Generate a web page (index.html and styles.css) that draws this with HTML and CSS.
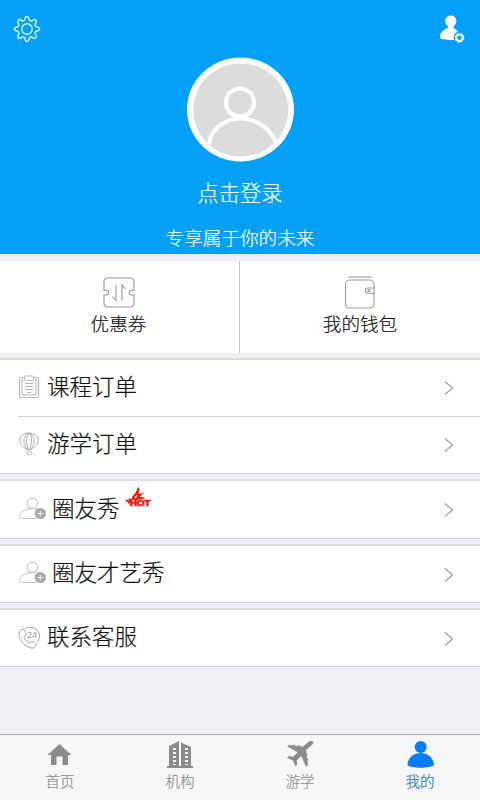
FILE: index.html
```html
<!DOCTYPE html>
<html lang="zh-CN">
<head>
<meta charset="utf-8">
<title>我的</title>
<link rel="stylesheet" href="styles.css">
</head>
<body>
<svg class="defs" width="0" height="0">
  <defs>
    <path id="tooth" d="M0-12.6C3-12.6 .7-9.3 3.4-8.2C6.1-7.1 6.9-11.1 8.9-8.9"/>
    <symbol id="chevron" viewBox="0 0 10 16"><path d="M1 1.500L8.500 8L1 14.500"/></symbol>
    <symbol id="friend" viewBox="0 0 30 26">
      <g fill="none" stroke="#c0c0c0"><circle cx="14.300" cy="7.200" r="5.200"/><path d="M18 22.500H4.500C1 22.500 .5 20 2.200 17.800C5 14 9.500 12.500 14 12.500C17 12.500 19.500 13 21.500 14"/></g>
      <circle cx="22.300" cy="17.500" r="5.600" fill="#a8a8a8"/><path d="M19.300 17.500h6M22.300 14.500v6" stroke="#eee"/>
    </symbol>
  </defs>
</svg>
<div class="app">
  <header class="profile">
    <div class="tools">
      <svg class="gear" width="28" height="28" viewBox="-14 -14 28 28">
        <use href="#tooth"/><use href="#tooth" transform="rotate(45)"/><use href="#tooth" transform="rotate(90)"/><use href="#tooth" transform="rotate(135)"/><use href="#tooth" transform="rotate(180)"/><use href="#tooth" transform="rotate(225)"/><use href="#tooth" transform="rotate(270)"/><use href="#tooth" transform="rotate(315)"/>
        <circle r="5.2"/>
      </svg>
      <svg width="26" height="28" viewBox="0 0 26 28">
        <path fill="#fff" d="M11 .5C7.500.5 5.200 3 5.300 6.200C5.400 8.500 6.300 10 7.800 11.200V13.200C3 14.600 0 17.500 0 22C0 24.200 4.500 25 10.500 25H14.200C12.800 21.500 14.300 17.800 18 16.700C16.800 14.800 15.200 13.800 13.700 13.200V11.200C15.300 10 16.400 8.300 16.400 6C16.400 3 14.200 .5 11 .5Z"/>
        <circle cx="19.500" cy="22.800" r="3.200" fill="none" stroke="#fff" stroke-width="1.800"/><circle cx="19.500" cy="22.800" r="4.300" fill="none" stroke="#fff" stroke-width="1.200" stroke-dasharray="1.900 1.477"/>
      </svg>
    </div>
    <svg class="avatar" width="108" height="106" viewBox="0 0 108 106">
      <ellipse cx="54.500" cy="52.500" rx="53.500" ry="52" fill="#fff"/>
      <ellipse cx="54.700" cy="53" rx="47.500" ry="46.500" fill="#dcdcdc"/>
      <g fill="none" stroke="#fff" stroke-width="4.200"><circle cx="54" cy="45.500" r="14"/><path d="M23.200 90C22 76 36 61.500 54.700 61.500C73.500 61.500 86 75 90.200 86"/></g>
    </svg>
    <div class="login">点击登录</div>
    <div class="slogan">专享属于你的未来</div>
  </header>

  <section class="cards">
    <div class="card">
      <svg width="32" height="32" viewBox="0 0 32 32" fill="none" stroke="#9a9a9a" stroke-width="1.1">
        <path d="M5 1H27Q31 1 31 5V13.200H28.700A2.400 2.400 0 0 0 28.700 18H31V26Q31 30 27 30H5Q1 30 1 26V18H3.300A2.400 2.400 0 0 0 3.300 13.200H1V5Q1 1 5 1Z"/>
        <path d="M13 8V23.500L9.500 19.500M19 23.500V8L22.500 12"/>
      </svg>
      <span>优惠券</span>
    </div>
    <div class="card">
      <svg width="32" height="34" viewBox="0 0 32 34" fill="none" stroke="#9a9a9a" stroke-width="1.1">
        <path d="M4 1H28"/><rect x="1.500" y="4" width="28.500" height="28" rx="4"/><path d="M30 12H24A2.600 2.600 0 0 0 24 17.200H30"/><circle cx="25" cy="14.600" r="1.100"/>
      </svg>
      <span>我的钱包</span>
    </div>
  </section>

  <section class="group pair">
    <div class="row">
      <svg class="icon" width="22" height="24" viewBox="0 0 22 24" fill="none" stroke="#b5b5b5">
        <rect x="1.500" y="2.500" width="19" height="20" rx="1.500"/><path d="M5 4.500H4V20H18V4.500H17"/><rect x="6.500" y="1" width="9" height="4.500" rx="1" fill="#fff"/><path d="M7 8.500h8M7 11.500h8M7 14.500h8M9 17.500h4"/>
      </svg>
      <span>课程订单</span><svg class="arrow"><use href="#chevron"/></svg>
    </div>
    <div class="row">
      <svg class="icon" width="22" height="24" viewBox="0 0 22 24" fill="none" stroke="#b0b0b0">
        <path d="M9 17.500C5.500 15 1.800 12 1.800 8C1.800 3.500 6 1 11 1S20.200 3.500 20.200 8C20.200 12 16.500 15 13 17.500ZM9.300 17.500C4 11 5 3 11 1C17 3 18 11 12.700 17.500M10.300 17.500C7.700 10 8 4 11 1C14 4 14.300 10 11.700 17.500"/><circle cx="11.300" cy="21" r="2"/>
      </svg>
      <span>游学订单</span><svg class="arrow"><use href="#chevron"/></svg>
    </div>
  </section>

  <section class="group show">
    <div class="row">
      <svg class="friend"><use href="#friend"/></svg>
      <span>圈友秀</span>
      <svg class="hot" width="28" height="24" viewBox="0 0 28 24">
        <path fill="#f51505" d="M7 13.500C6.500 11 8 9.500 10 7.500C12 5.500 11.500 3 13.500 1C15 3.500 14.500 5 13.300 7.500L15 8L20 6C18 8 15.500 9 15 10.500C16.500 11.500 18.500 11 20.500 12.500C17 13.500 14.500 12.500 13 14H7L5 16.500L3.500 18.500L3 16L.5 15.500L1 13.500L4 14.500L3.500 12Z"/>
        <path fill="#fff" d="M9.500 11L12.500 8.500L11.500 11.500L9.500 12.800Z"/>
        <text x="5" y="20.300" textLength="20.500" lengthAdjust="spacingAndGlyphs">HOT</text>
      </svg>
      <svg class="arrow"><use href="#chevron"/></svg>
    </div>
  </section>

  <section class="group talent">
    <div class="row">
      <svg class="friend"><use href="#friend"/></svg>
      <span>圈友才艺秀</span><svg class="arrow"><use href="#chevron"/></svg>
    </div>
  </section>

  <section class="group service">
    <div class="row">
      <svg class="icon" width="22" height="24" viewBox="0 0 22 24" fill="none" stroke="#a5a5a5">
        <path d="M5 3.300C2.500 3.500 .7 6 1 9C1.500 15 7.500 21 14 22.200C16.500 22 18.500 20 18.200 18.500C17.500 16.500 15.800 16 14.300 15.500C13 15.500 12.500 17 11 16.800C8.500 15.500 7 13.500 6.200 11.500C6.200 10 8 9.500 8 8C7.800 6 6.500 3.300 5 3.300Z"/><path d="M6.500 3.200C12-1 20.500 2 21.500 9C21.700 12 20.500 14.500 18.800 16"/><text class="num" x="9" y="11.800">24</text>
      </svg>
      <span>联系客服</span><svg class="arrow"><use href="#chevron"/></svg>
    </div>
  </section>

  <nav class="tabs">
    <div class="tab">
      <svg width="28" height="28" viewBox="0 0 28 28"><path d="M13.500 4L25.500 15H22V25H16.500V16.500H10.500V25H5V15H1.500Z"/></svg>
      <span>首页</span>
    </div>
    <div class="tab">
      <svg width="28" height="28" viewBox="0 0 28 28"><path d="M1 26H3V6L13 1V26H15V2.500L25 7V26H27V28H1Z"/><path d="M8.500 8V25M20.500 8V25" stroke="#f7f7f7" stroke-width="3" stroke-dasharray="2 2"/></svg>
      <span>机构</span>
    </div>
    <div class="tab">
      <svg width="28" height="28" viewBox="0 0 28 28"><path d="M26.800 1.700C25.500.8 23.500 1.200 22 2.500L17 7L13.800 6.300L13 5.200L11.700 6.400L8.300 5.600L7.500 4.800L6.200 5.700L3 5L1.700 6.500L12 12.200L7.200 17.100L2.700 16.300L1.500 17.800L7 20.300L9.500 25.900L11 24.600L10.500 20.300L15.500 15.800L20 26.300L21.700 25.300L21.200 20.800L22 19.600L21 18.300L20.400 15.800L21.400 14.600L20.200 13.300L19.800 10.100L25 5.500C26.500 4.100 27.600 2.700 26.800 1.700Z" stroke="#8b8b8b" stroke-width=".5"/></svg>
      <span>游学</span>
    </div>
    <div class="tab active">
      <svg width="28" height="28" viewBox="0 0 28 28"><circle cx="14.700" cy="6.900" r="6"/><path d="M14.700 12.900C22.200 12.900 27.900 18 27.900 25.200C24 28.500 5 28.500 1.500 25.200C1.500 18 7.200 12.900 14.700 12.900Z"/></svg>
      <span>我的</span>
    </div>
  </nav>
</div>
</body>
</html>
```
FILE: styles.css
```css
* { box-sizing: border-box; }
body {
  margin: 0;
  background: #efeff4;
  font-family: "Noto Sans CJK SC", sans-serif;
  font-weight: 300;
  color: #111;
  -webkit-text-stroke: .2px currentColor;
}
svg { display: block; flex: none; }
.defs { position: absolute; }
.app { height: 800px; display: flex; flex-direction: column; overflow: hidden; }

.profile {
  height: 254px;
  background: #02a1f7;
  color: #fff;
  display: flex;
  flex-direction: column;
  align-items: center;
}
.tools {
  width: 100%;
  height: 57px;
  padding: 15px 14px 0 13px;
  display: flex;
  justify-content: space-between;
}
.gear { fill: none; stroke: #d9f1ff; stroke-width: 1.5; }
.login { font-size: 21.2px; line-height: 30px; margin-top: 14px; }
.slogan { font-size: 18.6px; line-height: 28px; margin-top: 16px; }

.cards { margin-top: 7px; height: 92px; display: flex; background: #fff; }
.card {
  width: 50%;
  padding-top: 15px;
  display: flex;
  flex-direction: column;
  align-items: center;
  font-size: 18.6px;
  line-height: 28px;
}
.card:first-child { padding-right: 2px; border-right: 1px solid #c8c7cc; }
.card svg { height: 34px; }
.card span { margin-top: -1px; }

.group {
  background: #fff;
  border-top: 2px solid #dddde1;
  border-bottom: 1px solid #d4d4d8;
}
.pair { margin-top: 5px; height: 116px; }
.pair .row { height: 56px; }
.pair .row + .row {
  margin-left: 18px;
  padding-left: 0;
  border-top: 1px solid #d4d4d8;
  height: 57px;
}
.show { margin-top: 5px; height: 60px; }
.talent { margin-top: 5px; height: 59px; }
.service { margin-top: 5px; height: 59px; }
.row {
  height: 57px;
  padding: 0 26px 0 18px;
  display: flex;
  align-items: center;
  font-size: 22.5px;
  line-height: 34px;
}
.row span { margin-bottom: 6px; }
.talent span, .service span { margin-bottom: 8px; }
.icon { margin: 0 7px 2px 0; }
.friend { width: 30px; height: 26px; margin: 0 4px 1px 0; }
.talent .friend { margin-bottom: 3px; }
.arrow { width: 10px; height: 16px; margin-left: auto; fill: none; stroke: #a5a5a8; stroke-width: 1.3; }
.hot { margin: 0 0 23px 5px; }
.hot text { font: 900 8.5px "Liberation Sans", sans-serif; fill: #f51505; stroke: #f51505; stroke-width: .7; }
.num { font: 9px "Liberation Sans", sans-serif; fill: #999; stroke: none; }

.tabs {
  margin-top: auto;
  height: 66px;
  border-top: 1px solid #b2b2b5;
  background: #f7f7f7;
  display: flex;
}
.tab {
  flex: 1;
  padding-top: 5px;
  display: flex;
  flex-direction: column;
  align-items: center;
  font-size: 14.5px;
  line-height: 22px;
  color: #929292;
  fill: #8b8b8b;
}
.tab span { margin-top: 2px; }
.active { color: #1579e5; fill: #087cf8; }
```
